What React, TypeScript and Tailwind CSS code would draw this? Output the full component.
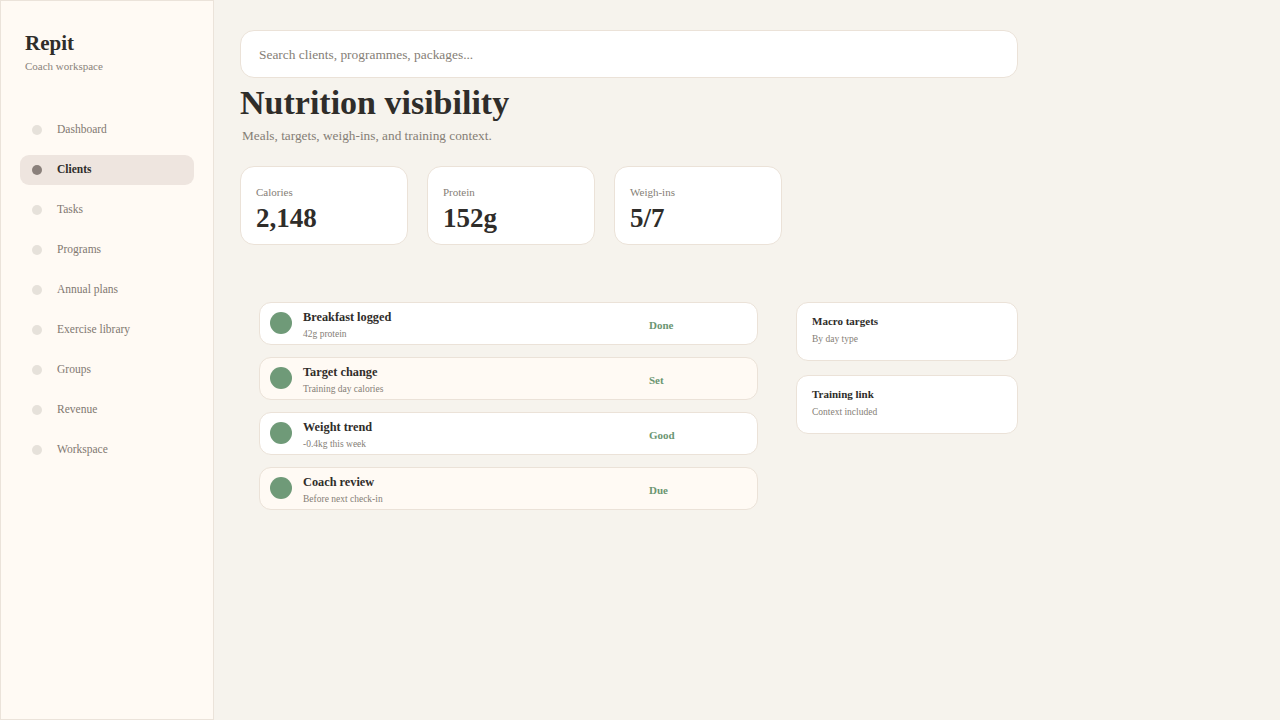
const nav = [
  "Dashboard",
  "Clients",
  "Tasks",
  "Programs",
  "Annual plans",
  "Exercise library",
  "Groups",
  "Revenue",
  "Workspace",
];

const stats = [
  { label: "Calories", value: "2,148" },
  { label: "Protein", value: "152g" },
  { label: "Weigh-ins", value: "5/7" },
];

const rows = [
  { title: "Breakfast logged", sub: "42g protein", status: "Done" },
  { title: "Target change", sub: "Training day calories", status: "Set" },
  { title: "Weight trend", sub: "-0.4kg this week", status: "Good" },
  { title: "Coach review", sub: "Before next check-in", status: "Due" },
];

const side = [
  { title: "Macro targets", sub: "By day type" },
  { title: "Training link", sub: "Context included" },
];

export default function App() {
  return (
    <div
      className="flex min-h-[720px] w-full bg-[#f6f3ed] text-[#2f2d2a]"
      style={{ fontFamily: '"Liberation Serif", "Times New Roman", serif' }}
    >
      {/* Sidebar */}
      <aside className="w-[214px] shrink-0 border border-[#ebe3da] bg-[#fffaf4] px-[19px] pt-[29px]">
        <div className="px-[5px]">
          <h1 className="text-[21px] font-bold leading-[26px]">Repit</h1>
          <p className="mt-[2px] text-[11px] text-[#8a837b]">Coach workspace</p>
        </div>
        <nav className="mt-[40px] flex flex-col gap-[10px]">
          {nav.map((item) => {
            const active = item === "Clients";
            return (
              <div
                key={item}
                className={`flex h-[30px] items-center gap-[15px] rounded-[9px] px-[12px] text-[11.5px] ${
                  active ? "bg-[#eee5df] font-bold text-[#2f2d2a]" : "text-[#7f7871]"
                }`}
              >
                <span
                  className={`h-[10px] w-[10px] rounded-full ${
                    active ? "bg-[#8a807b]" : "bg-[#e6e1da]"
                  }`}
                />
                {item}
              </div>
            );
          })}
        </nav>
      </aside>

      {/* Main */}
      <main className="flex-1 pl-[26px] pt-[30px]">
        <div className="w-[778px]">
          <div className="flex h-[48px] items-center rounded-[14px] border border-[#ebe2d8] bg-white px-[18px] pt-[2px] text-[13.4px] text-[#857e76]">
            Search clients, programmes, packages...
          </div>

          <h2 className="mt-[5px] text-[34px] font-bold leading-[40px]">Nutrition visibility</h2>
          <p className="mt-[3px] pl-[2px] text-[13.3px] text-[#857e76]">
            Meals, targets, weigh-ins, and training context.
          </p>

          <div className="mt-[20px] flex gap-[19px]">
            {stats.map((s) => (
              <div
                key={s.label}
                className="h-[79px] w-[168px] rounded-[14px] border border-[#ebe2d8] bg-white px-[15px] pt-[18px]"
              >
                <div className="text-[11px] leading-[14px] text-[#857e76]">{s.label}</div>
                <div className="mt-[2px] text-[27px] font-bold leading-[34px]">{s.value}</div>
              </div>
            ))}
          </div>

          <div className="mt-[57px] flex gap-[38px] pl-[19px]">
            <div className="flex w-[499px] flex-col gap-[12px]">
              {rows.map((r, i) => (
                <div
                  key={r.title}
                  className={`flex h-[43px] items-center rounded-[12px] border border-[#ebe2d8] pl-[10px] pt-[4px] ${
                    i % 2 === 0 ? "bg-white" : "bg-[#fffaf4]"
                  }`}
                >
                  <span className="-mt-[4px] h-[22px] w-[22px] shrink-0 rounded-full bg-[#6f9a78]" />
                  <div className="ml-[11px] w-[346px]">
                    <div className="text-[12.3px] font-bold leading-[15px]">{r.title}</div>
                    <div className="mt-[2px] text-[9.5px] leading-[14px] text-[#857e76]">{r.sub}</div>
                  </div>
                  <div className="text-[11px] font-bold text-[#6b9672]">{r.status}</div>
                </div>
              ))}
            </div>

            <div className="flex w-[222px] flex-col gap-[14px]">
              {side.map((c) => (
                <div
                  key={c.title}
                  className="h-[59px] rounded-[12px] border border-[#ebe2d8] bg-white px-[15px] pt-[11px]"
                >
                  <div className="text-[11px] font-bold leading-[14px]">{c.title}</div>
                  <div className="mt-[5px] text-[9.5px] leading-[12px] text-[#857e76]">{c.sub}</div>
                </div>
              ))}
            </div>
          </div>
        </div>
      </main>
    </div>
  );
}
